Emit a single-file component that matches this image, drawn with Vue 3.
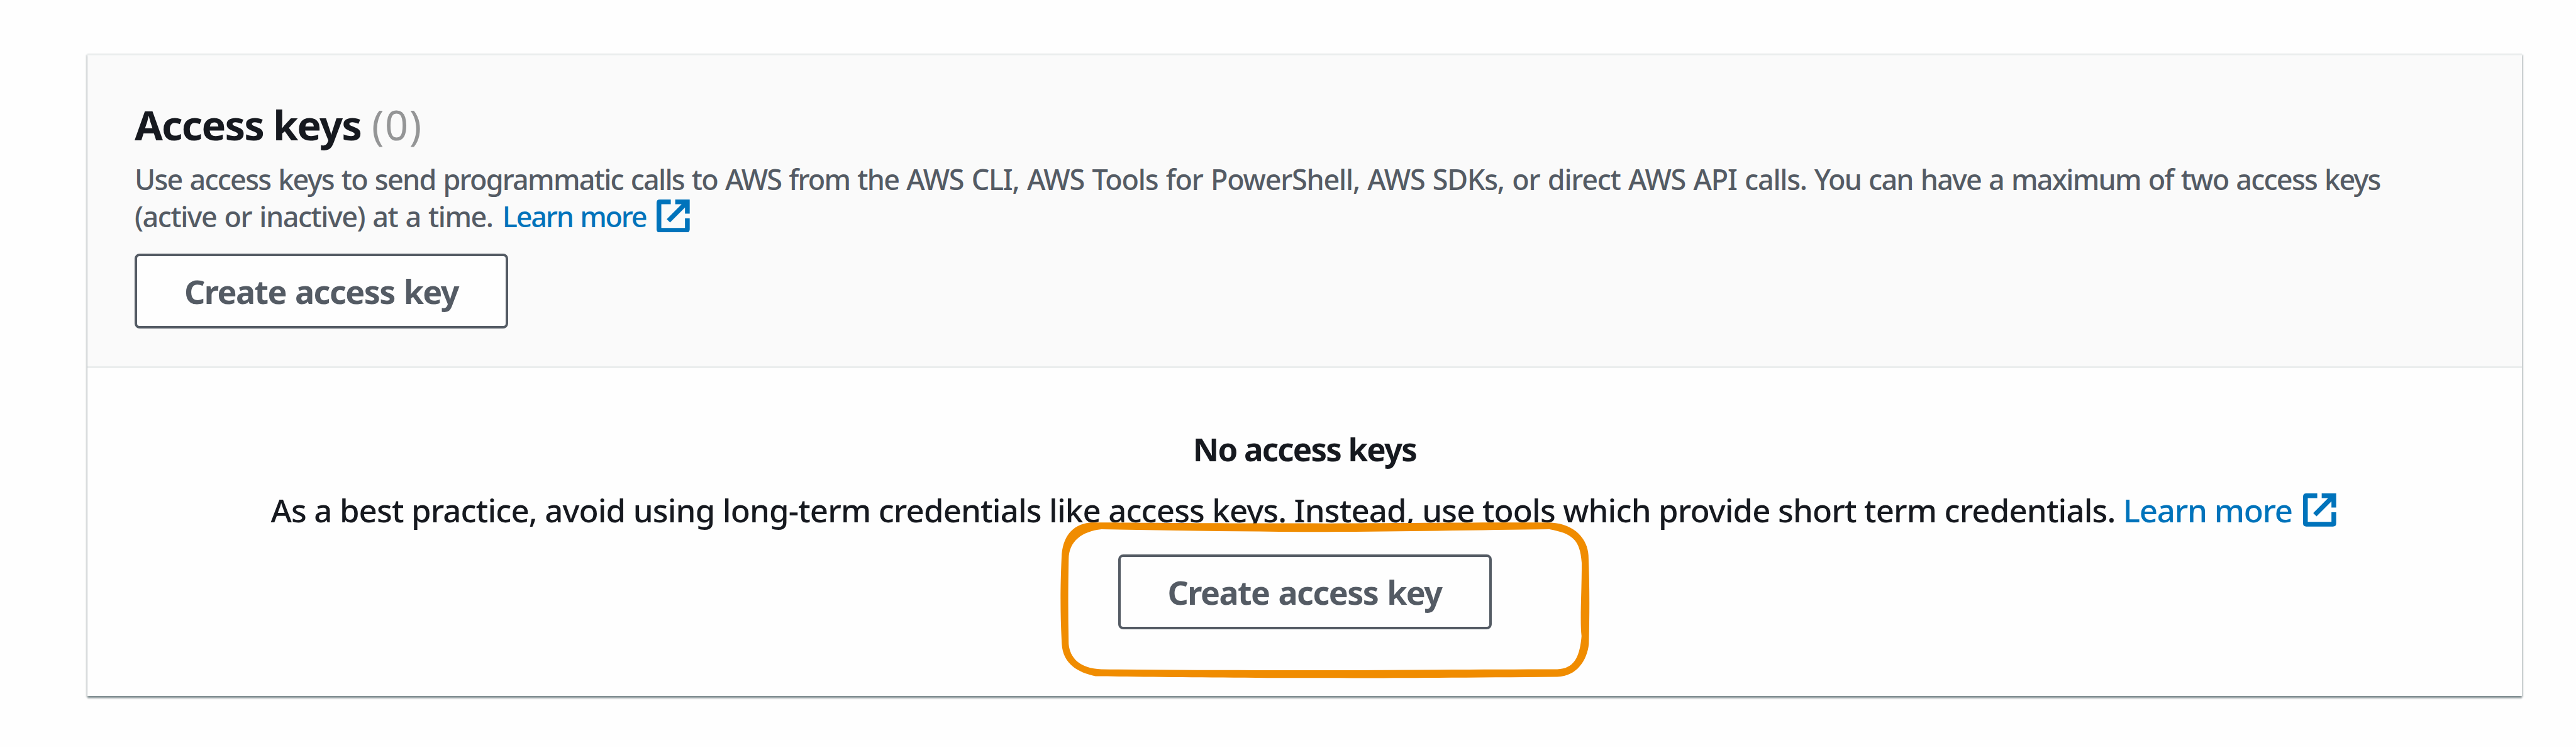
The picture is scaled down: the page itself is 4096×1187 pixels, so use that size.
<script setup>
const title = 'Access keys'
const count = 0
</script>

<template>
  <main class="page">
    <section class="card">
      <header class="card-header">
        <h2 class="title">{{ title }} <span class="count">({{ count }})</span></h2>
        <p class="description">
          Use access keys to send programmatic calls to AWS from the <span class="names">AWS CLI, AWS Tools for PowerShell, AWS SDKs, or direct AWS API calls.</span> You can have a maximum of two access keys<br />
          <span class="limit">(active or inactive) at a time. </span><a class="link">Learn more<svg class="external" viewBox="0 0 56 56" fill="none" stroke="currentColor" stroke-width="8"><path d="M24 4H5.500Q4 4 4 5.500V50.500Q4 52 5.500 52H50.500Q52 52 52 50.500V32" /><path d="M31.500 4H52V24M20 36L51 5" /></svg></a>
        </p>
        <button class="button">Create access key</button>
      </header>
      <div class="empty">
        <strong class="empty-title">No access keys</strong>
        <p class="empty-text">
          As a best practice, avoid using long-term credentials like access keys. Instead, use tools which provide short term credentials.
          <a class="link">Learn more<svg class="external" viewBox="0 0 56 56" fill="none" stroke="currentColor" stroke-width="8"><path d="M24 4H5.500Q4 4 4 5.500V50.500Q4 52 5.500 52H50.500Q52 52 52 50.500V32" /><path d="M31.500 4H52V24M20 36L51 5" /></svg></a>
        </p>
        <button class="button">Create access key</button>
      </div>
    </section>
    <svg class="highlight" viewBox="0 0 2760 900" fill="#f08c00" fill-rule="evenodd">
      <path d="M180 65C300 64 800 69 1380 69C1800 67 2200 64 2520 65C2640 72 2704 150 2708 230C2714 380 2714 520 2710 680C2702 760 2650 845 2550 846C2100 850 1700 853 1380 852C900 852 500 846 210 843C120 825 45 780 39 680C31 520 31 400 38 240C42 140 90 75 180 65ZM240 99C140 110 75 160 74 250C71 400 71 540 74 680C80 750 130 805 240 808C600 812 1000 813 1380 813C1800 812 2200 808 2550 808C2640 804 2664 740 2673 640C2664 560 2674 420 2674 270C2666 150 2624 120 2510 99C2200 102 1800 111 1380 112C1000 112 600 106 240 99Z" />
    </svg>
  </main>
</template>

<style>
body {
  margin: 0;
  background: #fefefe;
}
</style>

<style scoped>
.page {
  position: relative;
  box-sizing: border-box;
  width: 4096px;
  height: 1187px;
  padding: 85px 86px 0 139px;
  overflow: hidden;
  font-family: "Noto Sans", sans-serif;
  color: #16191f;
}
.card {
  box-sizing: border-box;
  height: 1021px;
  border-top: 3px solid #eaeded;
  background: #fefefe;
  box-shadow: 0 4px 2px rgba(0, 28, 36, 0.28), 2px 2px 2px rgba(0, 28, 36, 0.18), -2px 2px 2px rgba(0, 28, 36, 0.18);
}
.card-header {
  padding: 70px 75px 60px;
  border-bottom: 3px solid #eaeded;
  background: #fafafa;
}
.title {
  margin: 0;
  font-size: 65px;
  line-height: 80px;
  font-weight: 700;
  letter-spacing: -1.87px;
}
.count {
  margin-left: 2px;
  font-weight: 400;
  letter-spacing: 1.5px;
  color: #949596;
}
.description {
  margin: 16.6px 0 30px;
  font-size: 45px;
  line-height: 59.4px;
  font-weight: 500;
  letter-spacing: -1.78px;
  word-spacing: 2px;
  white-space: nowrap;
  color: #545b64;
}
.names {
  letter-spacing: -1.25px;
}
.limit {
  letter-spacing: -1.49px;
}
.link {
  color: #0073bb;
}
.description .link {
  margin-left: 3px;
  letter-spacing: -2.2px;
}
.external {
  width: 52.7px;
  height: 52.7px;
  margin-left: 17px;
  vertical-align: -8.3px;
}
.button {
  display: block;
  box-sizing: border-box;
  width: 594px;
  height: 119px;
  padding: 0;
  border: 4px solid #545b64;
  border-radius: 8px;
  background: #fefefe;
  color: #545b64;
  font: 700 52px/80px "Noto Sans", sans-serif;
  letter-spacing: -1.56px;
  word-spacing: 2px;
}
.empty {
  display: flex;
  flex-direction: column;
  align-items: center;
  padding-top: 88px;
}
.empty-title {
  font-size: 51px;
  line-height: 80px;
  font-weight: 700;
  letter-spacing: -1.8px;
}
.empty-text {
  margin: 17px 0 31px;
  padding-right: 4px;
  font-size: 51px;
  line-height: 80px;
  font-weight: 500;
  letter-spacing: -0.89px;
  white-space: nowrap;
}
.empty-text .link {
  letter-spacing: -1.28px;
}
.empty-text .external {
  vertical-align: -6.6px;
}
.highlight {
  position: absolute;
  left: 1675.7px;
  top: 809.6px;
  width: 866.1px;
  height: 282.4px;
}
</style>
